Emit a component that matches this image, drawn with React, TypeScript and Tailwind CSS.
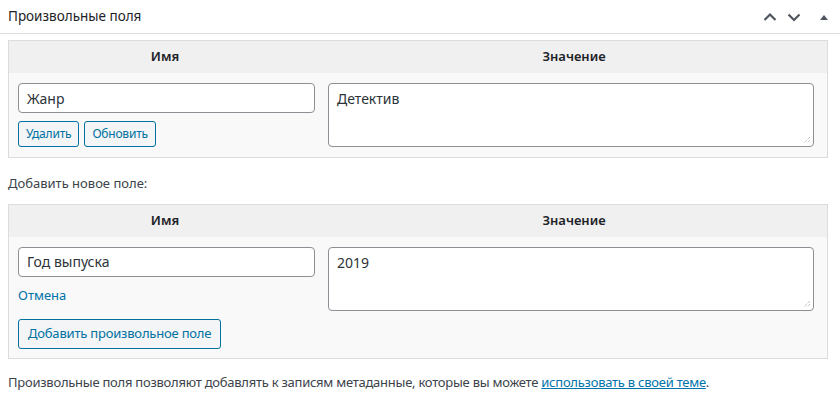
import React from "react";

const font = { fontFamily: '"Noto Sans", "Open Sans", sans-serif' };

const ChevronUp = () => (
  <svg width="16" height="16" viewBox="0 0 16 16" fill="none">
    <path d="M2.5 11 L8 5.5 L13.5 11" stroke="#50575e" strokeWidth="2.2" />
  </svg>
);

const ChevronDown = () => (
  <svg width="16" height="16" viewBox="0 0 16 16" fill="none">
    <path d="M2.5 5.5 L8 11 L13.5 5.5" stroke="#50575e" strokeWidth="2.2" />
  </svg>
);

const Triangle = () => (
  <svg width="12" height="12" viewBox="0 0 12 12">
    <path d="M2 9 L6 4 L10 9 Z" fill="#50575e" />
  </svg>
);

const Grip = () => (
  <svg
    width="8"
    height="8"
    viewBox="0 0 8 8"
    className="absolute bottom-[2px] right-[2px]"
  >
    <path d="M7 1 L1 7 M7 4 L4 7" stroke="#a7aaad" strokeWidth="1" strokeDasharray="1 1" />
  </svg>
);

const TableHead = () => (
  <div className="grid grid-cols-[312px_1fr] bg-[#f0f0f1] h-[32px] items-center text-[13px] font-semibold text-[#1d2327]">
    <div className="text-center">Имя</div>
    <div className="text-center">Значение</div>
  </div>
);

const TextInput = ({ value }: { value: string }) => (
  <div className="h-[30px] w-full rounded-[4px] border border-[#8c8f94] bg-white px-2 flex items-center text-[14px] text-[#2c3338]">
    {value}
  </div>
);

const TextArea = ({ value }: { value: string }) => (
  <div className="relative h-[64px] w-full rounded-[4px] border border-[#8c8f94] bg-white px-2 pt-[5px] text-[14px] text-[#2c3338] leading-[20px]">
    {value}
    <Grip />
  </div>
);

const SmallButton = ({ label }: { label: string }) => (
  <button className="h-[26px] rounded-[3px] border border-[#0071a1] bg-[#f3f5f6] px-[7px] text-[12px] tracking-[-0.2px] text-[#0071a1]">
    {label}
  </button>
);

export default function App() {
  return (
    <div className="w-[840px] h-[399px] bg-white overflow-hidden" style={font}>
      <div className="h-[34px] border-b border-[#dcdcde] flex items-center justify-between pl-2 pr-[10px]">
        <h2 className="text-[13.5px] text-[#1d2327]">Произвольные поля</h2>
        <div className="flex items-center gap-[8px]">
          <ChevronUp />
          <ChevronDown />
          <span className="ml-[8px] flex">
            <Triangle />
          </span>
        </div>
      </div>

      <div className="ml-2 mr-3 mt-[6px] border border-[#dcdcde] bg-[#f9f9f9]">
        <TableHead />
        <div className="grid grid-cols-[312px_1fr] pt-[10px] pb-[10px]">
          <div className="pl-[9px] pr-[6px] flex flex-col gap-[8px]">
            <TextInput value="Жанр" />
            <div className="flex gap-[5px]">
              <SmallButton label="Удалить" />
              <SmallButton label="Обновить" />
            </div>
          </div>
          <div className="pl-[7px] pr-[13px]">
            <TextArea value="Детектив" />
          </div>
        </div>
      </div>

      <p className="mt-[16px] ml-2 text-[13px] text-[#3c434a]">Добавить новое поле:</p>

      <div className="ml-2 mr-3 mt-[10px] border border-[#dcdcde] bg-[#f9f9f9]">
        <TableHead />
        <div className="grid grid-cols-[312px_1fr] pt-[10px] pb-[9px]">
          <div className="pl-[9px] pr-[6px] flex flex-col">
            <TextInput value="Год выпуска" />
            <a className="mt-[8px] text-[13px] text-[#0073aa] leading-[20px]">Отмена</a>
            <div className="mt-[14px]">
              <button className="h-[30px] rounded-[3px] border border-[#0071a1] bg-[#f3f5f6] px-[9px] text-[13px] tracking-[-0.2px] text-[#0071a1]">
                Добавить произвольное поле
              </button>
            </div>
          </div>
          <div className="pl-[7px] pr-[13px]">
            <TextArea value="2019" />
          </div>
        </div>
      </div>

      <p className="mt-[14px] ml-2 text-[13px] tracking-[-0.25px] text-[#3c434a]">
        Произвольные поля позволяют добавлять к записям метаданные, которые вы можете{" "}
        <a className="text-[#0073aa] underline">использовать в своей теме</a>.
      </p>
    </div>
  );
}
